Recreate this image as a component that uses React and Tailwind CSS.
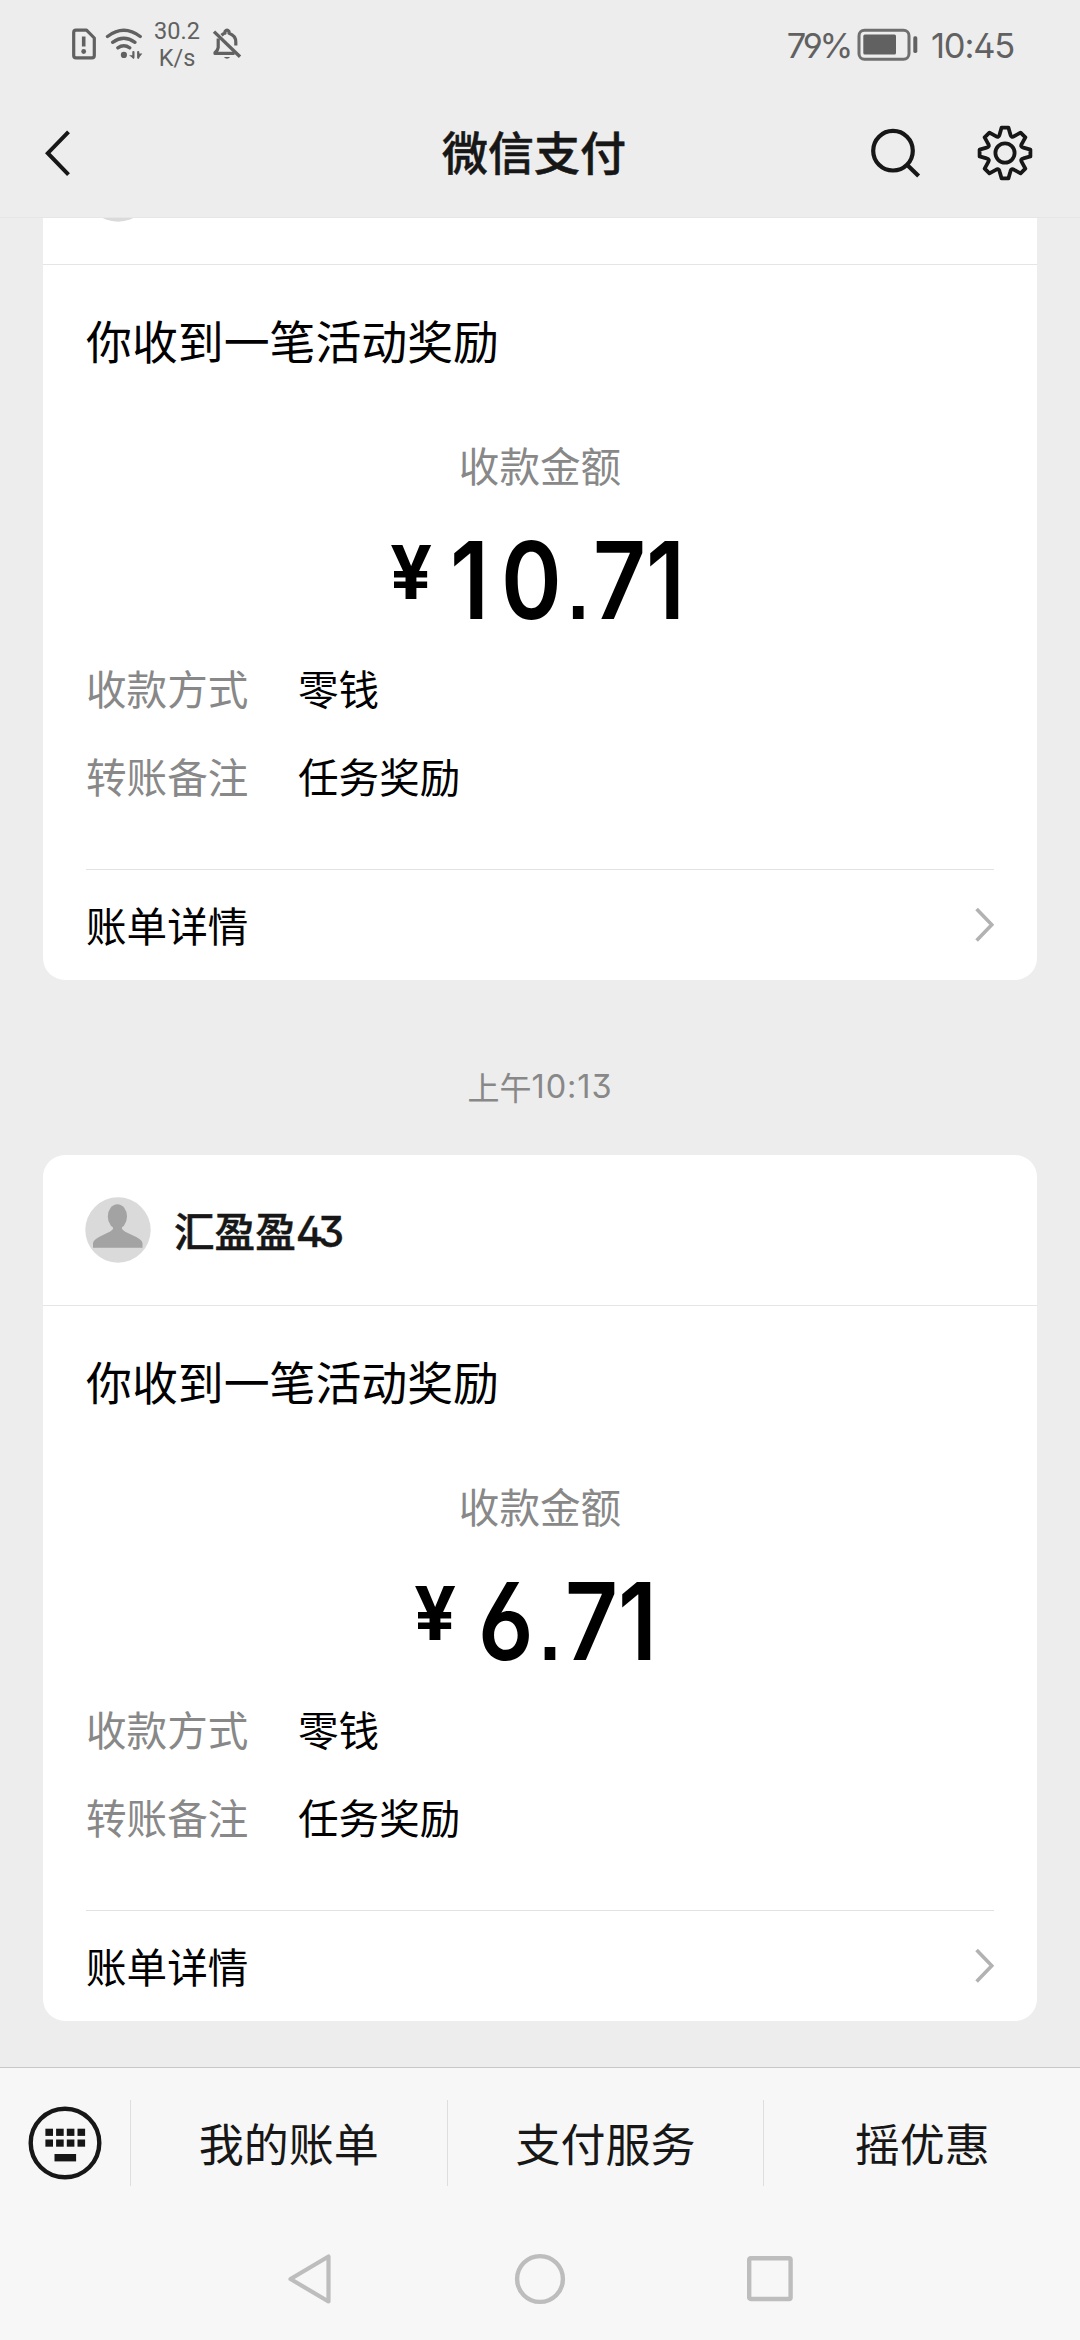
import React from "react";

const CJK = "font-['Noto_Sans_CJK_SC',sans-serif]";

function SimAlertIcon() {
  return (
    <svg className="h-[32px] w-[26px]" viewBox="71 27.5 26 32" fill="none" stroke="#616161" strokeWidth="3.2">
      <path d="M76 29.6H86.5L94.3 37.5V55Q94.3 57.4 92 57.4H76Q73.7 57.4 73.7 55V32Q73.7 29.6 76 29.6Z" strokeLinejoin="round" />
      <path d="M83.7 36V46" strokeWidth="3.6" />
      <circle cx="83.7" cy="51" r="2.4" fill="#616161" stroke="none" />
    </svg>
  );
}

function WifiIcon() {
  return (
    <svg className="h-[32px] w-[38px]" viewBox="105 27.5 38 32" fill="none" stroke="#616161" strokeWidth="3.4" strokeLinecap="round">
      <path d="M107.5 36Q123.8 23.6 140.2 36" />
      <path d="M112.6 41.8Q123.8 33.6 135 41.8" />
      <path d="M117.8 47.4Q123.8 43.2 129.8 47.4" />
      <circle cx="123.9" cy="54.4" r="3.1" fill="#616161" stroke="none" />
      <path d="M134 50.2V58.6L129 54.8H134M138 50.2V58.6M138 58.6L142.4 53H138Z" fill="#616161" stroke="none" />
      <path d="M133.4 51.5V57M138.2 51.5V57.2" strokeWidth="2.2" />
    </svg>
  );
}

function BellOffIcon() {
  return (
    <svg className="h-[32px] w-[30px]" viewBox="212 28 30 32" fill="none" stroke="#616161" strokeWidth="3.2">
      <path d="M218.2 38.5V47.5Q218 50 215 52.6V53.4H234.5" strokeLinejoin="round" />
      <path d="M221.5 35.3Q224 33 225 33.2V31.4Q227 28.8 229 31.4V33.2Q235.8 35.5 235.8 42V45.6" strokeLinejoin="round" />
      <path d="M214 31.6L240 56.8" strokeWidth="3.4" />
      <path d="M223.8 57H230.2Q227 60.6 223.8 57Z" fill="#616161" stroke="none" />
    </svg>
  );
}

function BatteryIcon() {
  return (
    <svg className="h-[33px] w-[61px]" viewBox="855 28 61 33" fill="none">
      <rect x="857" y="30.2" width="50" height="29" rx="5.5" stroke="#6f6f6f" strokeWidth="3" />
      <rect x="861.3" y="34.6" width="32.7" height="19.8" rx="1.5" fill="#616161" />
      <rect x="911.3" y="36.3" width="4" height="16.6" rx="1.6" fill="#616161" />
    </svg>
  );
}

function SearchIcon() {
  return (
    <svg className="h-[52px] w-[52px]" viewBox="869 127 52 52" fill="none" stroke="#171717" strokeWidth="4.2">
      <circle cx="893" cy="150.7" r="19.8" />
      <path d="M907.5 165.2L918.6 176" />
    </svg>
  );
}

const TOOTH = [
  [-5.4, -18.4],
  [-3.4, -25.4],
  [3.4, -25.4],
  [5.4, -18.4],
];

function gearPath() {
  const rotate = ([x, y], a) => {
    const c = Math.cos(a);
    const s = Math.sin(a);
    return `${(x * c - y * s).toFixed(2)} ${(x * s + y * c).toFixed(2)}`;
  };
  let d = "";
  for (let i = 0; i < 8; i++) {
    const a = (i * Math.PI) / 4;
    const [p0, p1, p2, p3] = TOOTH.map((p) => rotate(p, a));
    const valley = rotate([0, -16.2], a + Math.PI / 8);
    const next = rotate(TOOTH[0], a + Math.PI / 4);
    d += `${i === 0 ? `M${p0}` : ""}L${p1}L${p2}L${p3}Q${valley} ${next}`;
  }
  return d + "Z";
}

function GearIcon() {
  return (
    <svg className="h-[56px] w-[56px]" viewBox="-28 -28 56 56" fill="none" stroke="#171717" strokeWidth="3.8" strokeLinejoin="round">
      <path d={gearPath()} />
      <circle r="9.6" />
    </svg>
  );
}

function StatusBar() {
  return (
    <div className="flex h-[88px] shrink-0 items-center justify-between pl-[71px] pr-[66px] text-[#616161]">
      <div className="flex items-center">
        <SimAlertIcon />
        <div className="ml-2">
          <WifiIcon />
        </div>
        <div className="ml-[11px] w-[46px] pt-[2px] text-center font-['Roboto',sans-serif] text-[23.5px] leading-[27px]">
          <div>30.2</div>
          <div>K/s</div>
        </div>
        <div className="ml-[12px]">
          <BellOffIcon />
        </div>
      </div>
      <div className="flex items-center whitespace-nowrap font-['Inter',sans-serif] text-[34.5px] leading-[40px] [font-feature-settings:'ss01']">
        <span className="pt-[3px] tracking-[-3.4px]">79%</span>
        <div className="ml-[7px] mr-[13px]">
          <BatteryIcon />
        </div>
        <span className="pt-[3px] tracking-[-1.2px]">10:45</span>
      </div>
    </div>
  );
}

function NavBar() {
  return (
    <div className="grid h-[130px] shrink-0 grid-cols-3 items-center border-b border-[#e6e6e6] pl-[44px] pr-[47px] text-[#171717]">
      <svg className="h-[48px] w-[28px]" viewBox="44 129 28 48" fill="none" stroke="#171717" strokeWidth="4">
        <path d="M68.5 131.8L47.8 153.2L68.5 174.6" />
      </svg>
      <h1 className="pb-[5px] pr-[9px] text-center text-[46px] font-medium leading-[60px] [-webkit-text-stroke:0.5px_#171717]">微信支付</h1>
      <div className="flex items-center justify-end gap-[56px]">
        <SearchIcon />
        <GearIcon />
      </div>
    </div>
  );
}

function Avatar() {
  return (
    <svg className="h-[66px] w-[66px]" viewBox="0 0 66 66">
      <circle cx="33" cy="33" r="32.7" fill="#dadada" />
      <ellipse cx="32.4" cy="19.5" rx="9.6" ry="12.3" fill="#a3a3a3" />
      <path d="M28 27H37V32Q39 34.5 46 37.5Q57.5 42.5 57.5 46V50.8H8V46Q8 42.5 19 37.5Q27 34 28 32Z" fill="#a3a3a3" />
    </svg>
  );
}

function Row({ label, value }) {
  return (
    <div className="flex h-[88px] items-center text-[40.6px]">
      <span className="w-[212px] text-[#888888]">{label}</span>
      <span>{value}</span>
    </div>
  );
}

// Trailing space of each amount glyph.
const GLYPH = {
  1: "tracking-[14px]",
  0: "tracking-[7px]",
  6: "tracking-[7px]",
  7: "tracking-[0px]",
  ".": "tracking-[5px] font-['Liberation_Sans',sans-serif] text-[88px] font-bold",
};

function Amount({ value, signWidth, valueWidth }) {
  return (
    <div className="flex h-[129px] items-center justify-center font-['Inter',sans-serif] font-semibold leading-none">
      <div className="flex items-start">
        <span className={`${signWidth} pl-[5px] pt-[10px] text-[74px] font-bold`}>¥</span>
        <span className={`${valueWidth} pt-[2px]`}>
          <span className="inline-block origin-left scale-x-[0.86] whitespace-nowrap text-[107px] leading-none [font-feature-settings:'ss01']">
            {[...value].map((c, i) => (
              <span key={i} className={GLYPH[c]}>{c}</span>
            ))}
          </span>
        </span>
      </div>
    </div>
  );
}

function PaymentCard({ name, number, children }) {
  return (
    <section className="flex h-[866px] shrink-0 flex-col rounded-[22px] bg-white text-black">
      <div className="flex h-[151px] items-center border-b border-[#e5e5e5] px-[42px] text-[#171717]">
        <Avatar />
        {name && (
          <div className="ml-[23px] flex items-center pt-[1px]">
            <span className="text-[40.6px] font-medium [-webkit-text-stroke:0.5px_#171717]">{name}</span>
            <span className="pt-[4px] font-['Inter',sans-serif] text-[42px] font-medium leading-none tracking-[-5.6px] [-webkit-text-stroke:0.4px_#171717] [font-feature-settings:'ss01']">{number}</span>
          </div>
        )}
      </div>
      <div className="px-[43px]">
        <div className="flex h-[150px] items-center pb-[2px] text-[45.9px]">你收到一笔活动奖励</div>
        <div className="flex h-[100px] items-center justify-center text-[40.6px] text-[#888888]">收款金额</div>
        {children}
        <Row label="收款方式" value="零钱" />
        <Row label="转账备注" value="任务奖励" />
        <div className="mt-[49px] flex h-[111px] items-center justify-between border-t border-[#e2e2e2] text-[40.6px]">
          <span>账单详情</span>
          <svg className="h-[36px] w-[20px]" viewBox="974.6 907 20 36" fill="none" stroke="#b2b2b2" strokeWidth="3.6">
            <path d="M977.2 908.9L992.4 924.7L977.2 940.5" />
          </svg>
        </div>
      </div>
    </section>
  );
}

function KeyboardIcon() {
  return (
    <svg className="h-[74px] w-[74px]" viewBox="28.4 2106.3 74 74" fill="#171717">
      <circle cx="65.4" cy="2143.3" r="34.3" fill="none" stroke="#171717" strokeWidth="4.4" />
      {[45.8, 56.5, 67.2, 77.9].map((x) => (
        <React.Fragment key={x}>
          <rect x={x} y="2129" width="7.6" height="7.2" />
          <rect x={x} y="2139.8" width="7.6" height="7.2" />
        </React.Fragment>
      ))}
      <rect x="54.9" y="2154.3" width="21.6" height="7.4" />
    </svg>
  );
}

function BottomMenu() {
  return (
    <div className="flex h-[150px] shrink-0 items-center text-[45px] text-[#171717]">
      <div className="flex w-[130px] justify-start pl-[28px]">
        <KeyboardIcon />
      </div>
      {["我的账单", "支付服务", "摇优惠"].map((item) => (
        <div key={item} className="flex h-[86px] flex-1 items-center justify-center border-l border-[#dedede]">
          {item}
        </div>
      ))}
    </div>
  );
}

function SystemNav() {
  return (
    <div className="flex flex-1 items-center justify-center gap-[178px] pb-[1px]">
      <svg className="h-[52px] w-[52px]" viewBox="283 2253 52 52" fill="none" stroke="#bdbdbd" strokeWidth="4.2" strokeLinejoin="round">
        <path d="M289.5 2279L327.5 2256.5V2301.5Z" />
      </svg>
      <svg className="h-[52px] w-[52px]" viewBox="0 0 52 52" fill="none" stroke="#bdbdbd" strokeWidth="4.4">
        <circle cx="26" cy="26" r="22.9" />
      </svg>
      <svg className="h-[52px] w-[52px]" viewBox="0 0 52 52" fill="none" stroke="#bdbdbd" strokeWidth="4.4">
        <rect x="5.2" y="5.2" width="41.4" height="40.8" rx="1.5" />
      </svg>
    </div>
  );
}

export default function App() {
  return (
    <div className={`${CJK} flex h-[2340px] w-[1080px] flex-col overflow-hidden bg-[#ededed]`}>
      <StatusBar />
      <NavBar />
      <main className="flex h-[1849px] shrink-0 flex-col overflow-hidden px-[43px]">
        <div className="-mt-[104px] flex flex-col">
          <PaymentCard>
            <Amount value="10.71" signWidth="w-[65px]" valueWidth="w-[245px]" />
          </PaymentCard>
          <div className="flex h-[175px] items-center justify-center pt-[36px] text-[32px] text-[#888888]">
            上午
            <span className="pt-[4px] font-['Inter',sans-serif] text-[32.5px] tracking-[0.9px] [font-feature-settings:'ss01']">10:13</span>
          </div>
          <PaymentCard name="汇盈盈" number="43">
            <Amount value="6.71" signWidth="w-[69px]" valueWidth="w-[193px]" />
          </PaymentCard>
        </div>
      </main>
      <footer className="flex flex-1 flex-col border-t border-[#c8c8c8] bg-[#f7f7f7]">
        <BottomMenu />
        <SystemNav />
      </footer>
    </div>
  );
}
